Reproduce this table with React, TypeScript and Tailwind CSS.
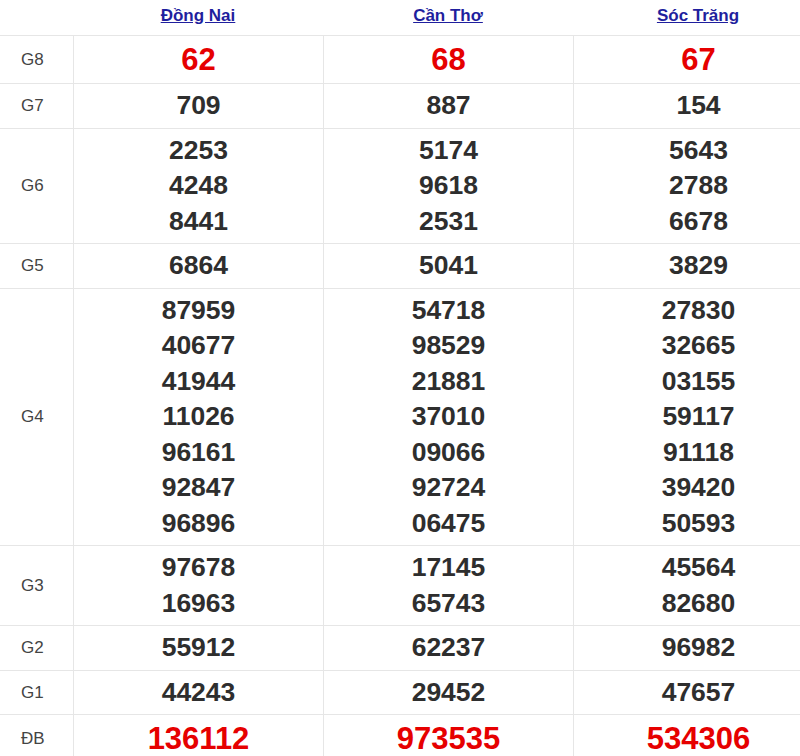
const provinces = ['Đồng Nai', 'Cần Thơ', 'Sóc Trăng']

type Row = { label: string; cols: string[][]; big?: boolean }

const rows: Row[] = [
  { label: 'G8', cols: [['62'], ['68'], ['67']], big: true },
  { label: 'G7', cols: [['709'], ['887'], ['154']] },
  {
    label: 'G6',
    cols: [
      ['2253', '4248', '8441'],
      ['5174', '9618', '2531'],
      ['5643', '2788', '6678'],
    ],
  },
  { label: 'G5', cols: [['6864'], ['5041'], ['3829']] },
  {
    label: 'G4',
    cols: [
      ['87959', '40677', '41944', '11026', '96161', '92847', '96896'],
      ['54718', '98529', '21881', '37010', '09066', '92724', '06475'],
      ['27830', '32665', '03155', '59117', '91118', '39420', '50593'],
    ],
  },
  {
    label: 'G3',
    cols: [
      ['97678', '16963'],
      ['17145', '65743'],
      ['45564', '82680'],
    ],
  },
  { label: 'G2', cols: [['55912'], ['62237'], ['96982']] },
  { label: 'G1', cols: [['44243'], ['29452'], ['47657']] },
  { label: 'ĐB', cols: [['136112'], ['973535'], ['534306']], big: true },
]

export default function App() {
  return (
    <div className="h-[756px] w-[800px] overflow-hidden bg-white font-['Liberation_Sans',Arial,sans-serif]">
      <div className="w-[823px]">
        <div className="grid h-[36px] grid-cols-[73px_250px_250px_250px] border-b border-[#e6e6e6]">
          <div />
          {provinces.map((p) => (
            <div key={p} className="flex items-start justify-center pt-[3px]">
              <a href="#" className="text-[17px] font-bold text-[#1f1f9e] underline">
                {p}
              </a>
            </div>
          ))}
        </div>
        {rows.map((r) => (
          <div
            key={r.label}
            className="grid grid-cols-[73px_250px_250px_250px] border-b border-[#e6e6e6]"
          >
            <div className="flex items-center pl-[21px] text-[17px] text-[#444]">{r.label}</div>
            {r.cols.map((c, i) => (
              <div
                key={i}
                className="flex flex-col items-center justify-center border-l border-[#e6e6e6] py-[4px]"
              >
                {c.map((n) =>
                  r.big ? (
                    <span key={n} className="text-[31px] leading-[39px] font-bold text-[#e60000]">
                      {n}
                    </span>
                  ) : (
                    <span key={n} className="text-[26.5px] leading-[35.5px] font-bold text-[#2e2e2e]">
                      {n}
                    </span>
                  ),
                )}
              </div>
            ))}
          </div>
        ))}
      </div>
    </div>
  )
}
